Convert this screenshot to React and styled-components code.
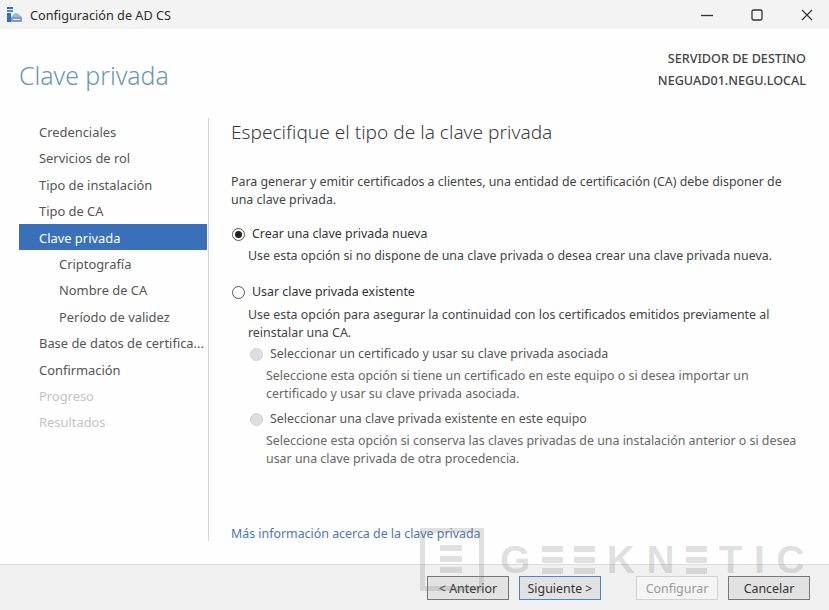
import React from "react";
import styled, { createGlobalStyle } from "styled-components";

const Global = createGlobalStyle`
  html, body { margin: 0; padding: 0; background: #fff; }
  body { font-family: "Noto Sans", "Open Sans", sans-serif; }
`;

const Win = styled.div`
  position: relative;
  width: 829px;
  height: 610px;
  overflow: hidden;
  background: #fefefe;
  display: flex;
  flex-direction: column;
`;

const TitleBar = styled.div`
  height: 29px;
  background: #f3f3f3;
  display: flex;
  align-items: center;
  padding-left: 6px;
  gap: 7px;
  font-size: 12.7px;
  color: #2c2c2c;
`;
const TitleText = styled.span`
  flex: 1;
`;
const WinButtons = styled.div`
  display: flex;
  margin-right: -3px;
`;
const WinButton = styled.div`
  width: 50px;
  height: 29px;
  display: flex;
  align-items: center;
  justify-content: center;
`;

const Header = styled.div`
  height: 89px;
  display: flex;
  justify-content: space-between;
  box-sizing: border-box;
  padding: 19px 23px 0 19px;
`;
const PageTitle = styled.h1`
  margin: 11px 0 0;
  font-size: 24.8px;
  font-weight: 300;
  line-height: 32px;
  color: #6b97b5;
`;
const Server = styled.div`
  text-align: right;
  font-size: 12.6px;
  line-height: 22px;
  font-weight: 500;
  color: #444;
`;

const Body = styled.div`
  height: 423px;
  display: flex;
`;
const Side = styled.nav`
  width: 209px;
  box-sizing: border-box;
  padding: 0 1px 0 19px;
  border-right: 1px solid #d4d4d4;
`;
const NavItem = styled.div`
  height: 26.4px;
  line-height: 28px;
  font-size: 12.9px;
  white-space: nowrap;
  overflow: hidden;
  padding-left: ${(p) => (p.$sub ? 40 : 20)}px;
  color: ${(p) => (p.$active ? "#fff" : p.$off ? "#c4c4c4" : "#555")};
  background: ${(p) => (p.$active ? "#3a6fba" : "transparent")};
`;

const Main = styled.main`
  flex: 1;
  display: flex;
  flex-direction: column;
  padding-left: 22px;
  padding-right: 30px;
  font-size: 12.4px;
  line-height: 18px;
  color: #444;
  white-space: nowrap;
`;
const Heading = styled.h2`
  margin: 0;
  font-size: 19.1px;
  line-height: 28px;
  font-weight: 300;
  color: #3d3d3d;
`;
const Para = styled.p`
  margin: ${(p) => p.$top ?? 4}px 0 0 ${(p) => p.$indent ?? 0}px;
  color: ${(p) => (p.$off ? "#666" : "#444")};
`;
const RadioRow = styled.label`
  display: flex;
  align-items: center;
  gap: 7px;
  margin: ${(p) => p.$top ?? 4}px 0 0 ${(p) => p.$indent ?? 1}px;
  color: ${(p) => (p.$off ? "#555" : "#333")};
`;
const Radio = styled.span`
  width: 13px;
  height: 13px;
  box-sizing: border-box;
  border-radius: 50%;
  border: 1px solid ${(p) => (p.$off ? "#d0d0d0" : "#555")};
  background: ${(p) => (p.$off ? "#dedede" : "#fff")};
  display: flex;
  align-items: center;
  justify-content: center;
  &::after {
    content: "";
    width: 7px;
    height: 7px;
    border-radius: 50%;
    background: ${(p) => (p.$on ? "#222" : "transparent")};
  }
`;
const MoreLink = styled.a`
  margin-top: auto;
  line-height: 14px;
  color: #4a76b8;
`;

const Footer = styled.div`
  margin-top: 23px;
  flex: 1;
  background: #f0f0f0;
  border-top: 1px solid #dcdcdc;
  display: flex;
  justify-content: flex-end;
  align-items: flex-start;
  padding: 11px 19px 0 0;
  gap: 10px;
`;
const Btn = styled.button`
  width: 82px;
  height: 24px;
  padding: 0;
  margin-left: ${(p) => p.$gap || 0}px;
  box-sizing: border-box;
  font: inherit;
  font-size: 12.4px;
  color: ${(p) => (p.$off ? "#9a9a9a" : "#333")};
  background: ${(p) => (p.$off ? "#f4f4f4" : "#e2e2e2")};
  border: 1px solid ${(p) => (p.$off ? "#d2d2d2" : p.$focus ? "#4a86d0" : "#777")};
`;

const Watermark = styled.div`
  position: absolute;
  left: 420px;
  top: 528px;
  display: flex;
  align-items: center;
  gap: 16px;
  pointer-events: none;
  color: rgba(120, 120, 120, 0.22);
`;
const Word = styled.div`
  display: flex;
  align-items: center;
  gap: 11.5px;
  font-family: "Liberation Sans", sans-serif;
  font-weight: 700;
  font-size: 39px;
  line-height: 44px;
`;
const Bars = styled.span`
  width: 21px;
  height: 28px;
  background: repeating-linear-gradient(
    to bottom,
    currentColor 0 6px,
    transparent 6px 11px
  );
`;

const AppIcon = () => (
  <svg width="17" height="17" viewBox="0 0 17 17">
    <rect x="1" y="1" width="6" height="2" fill="#2f6fc0" />
    <rect x="1" y="4" width="6" height="2" fill="#4a8ad4" />
    <rect x="1" y="7" width="4" height="9" fill="#2f6fc0" />
    <path d="M5 11 L9 7 L11 7 L16 11 Z" fill="#9ab8d4" />
    <rect x="5" y="11" width="11" height="5" rx="1" fill="#7c9cba" />
    <rect x="7" y="13" width="7" height="1" fill="#e8eef4" />
  </svg>
);

const MinIcon = () => (
  <svg width="12" height="12" viewBox="0 0 12 12">
    <path d="M0 6.5 H12" stroke="#333" strokeWidth="1.3" />
  </svg>
);
const MaxIcon = () => (
  <svg width="12" height="12" viewBox="0 0 12 12">
    <rect x="1" y="1" width="10" height="10" rx="1.5" fill="none" stroke="#333" strokeWidth="1.3" />
  </svg>
);
const CloseIcon = () => (
  <svg width="12" height="12" viewBox="0 0 12 12">
    <path d="M1 1 L11 11 M11 1 L1 11" stroke="#333" strokeWidth="1.2" />
  </svg>
);

const MarkIcon = () => (
  <svg width="64" height="63" viewBox="0 0 64 63">
    <path d="M2.5 2.5 H61.5 V60.5 H2.5 Z" fill="none" stroke="currentColor" strokeWidth="5" />
    <path d="M20 20 H42 M20 31 H42 M20 42 H42" stroke="currentColor" strokeWidth="6" />
  </svg>
);

const steps = [
  { label: "Credenciales" },
  { label: "Servicios de rol" },
  { label: "Tipo de instalación" },
  { label: "Tipo de CA" },
  { label: "Clave privada", active: true },
  { label: "Criptografía", sub: true },
  { label: "Nombre de CA", sub: true },
  { label: "Período de validez", sub: true },
  { label: "Base de datos de certifica..." },
  { label: "Confirmación" },
  { label: "Progreso", off: true },
  { label: "Resultados", off: true },
];

export default function App() {
  return (
    <Win>
      <Global />
      <TitleBar>
        <AppIcon />
        <TitleText>Configuración de AD CS</TitleText>
        <WinButtons>
          <WinButton><MinIcon /></WinButton>
          <WinButton><MaxIcon /></WinButton>
          <WinButton><CloseIcon /></WinButton>
        </WinButtons>
      </TitleBar>
      <Header>
        <PageTitle>Clave privada</PageTitle>
        <Server>
          SERVIDOR DE DESTINO
          <br />
          NEGUAD01.NEGU.LOCAL
        </Server>
      </Header>
      <Body>
        <Side>
          {steps.map((s) => (
            <NavItem key={s.label} $active={s.active} $sub={s.sub} $off={s.off}>
              {s.label}
            </NavItem>
          ))}
        </Side>
        <Main>
          <Heading>Especifique el tipo de la clave privada</Heading>
          <Para $top={27}>
            Para generar y emitir certificados a clientes, una entidad de certificación (CA) debe disponer de
            <br />
            una clave privada.
          </Para>
          <RadioRow $top={16}>
            <Radio $on />
            Crear una clave privada nueva
          </RadioRow>
          <Para $indent={17}>Use esta opción si no dispone de una clave privada o desea crear una clave privada nueva.</Para>
          <RadioRow $top={18}>
            <Radio />
            Usar clave privada existente
          </RadioRow>
          <Para $indent={17} $top={5}>
            Use esta opción para asegurar la continuidad con los certificados emitidos previamente al
            <br />
            reinstalar una CA.
          </Para>
          <RadioRow $indent={19} $top={3} $off>
            <Radio $off />
            Seleccionar un certificado y usar su clave privada asociada
          </RadioRow>
          <Para $indent={35} $off>
            Seleccione esta opción si tiene un certificado en este equipo o si desea importar un
            <br />
            certificado y usar su clave privada asociada.
          </Para>
          <RadioRow $indent={19} $top={7} $off>
            <Radio $off />
            Seleccionar una clave privada existente en este equipo
          </RadioRow>
          <Para $indent={35} $off>
            Seleccione esta opción si conserva las claves privadas de una instalación anterior o si desea
            <br />
            usar una clave privada de otra procedencia.
          </Para>
          <MoreLink>Más información acerca de la clave privada</MoreLink>
        </Main>
      </Body>
      <Footer>
        <Btn>&lt; Anterior</Btn>
        <Btn $focus>Siguiente &gt;</Btn>
        <Btn $off $gap={25}>Configurar</Btn>
        <Btn>Cancelar</Btn>
      </Footer>
      <Watermark>
        <MarkIcon />
        <Word>
          <span>G</span>
          <Bars />
          <Bars />
          <span>K</span>
          <span>N</span>
          <Bars />
          <span>T</span>
          <span>I</span>
          <span>C</span>
        </Word>
      </Watermark>
    </Win>
  );
}
